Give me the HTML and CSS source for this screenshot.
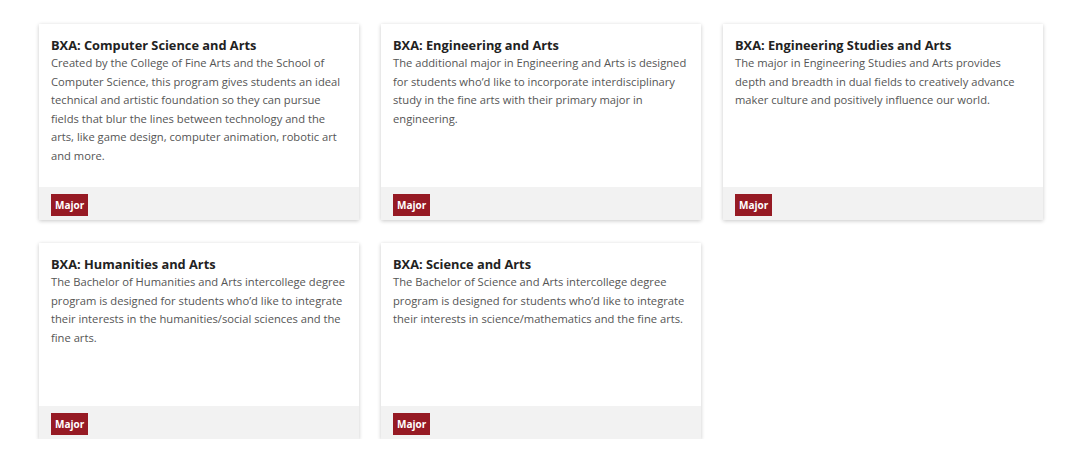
FILE: index.html
```html
<!DOCTYPE html>
<html lang="en">
<head>
<meta charset="utf-8">
<title>BXA Programs</title>
<link rel="stylesheet" href="styles.css">
</head>
<body>
<div class="grid">
  <div class="card">
    <div class="card-body">
      <h3 class="card-title">BXA: Computer Science and Arts</h3>
      <p class="card-text">Created by the College of Fine Arts and the School of Computer Science, this program gives students an ideal technical and artistic foundation so they can pursue fields that blur the lines between technology and the arts, like game design, computer animation, robotic art and more.</p>
    </div>
    <div class="card-footer"><span class="badge">Major</span></div>
  </div>
  <div class="card">
    <div class="card-body">
      <h3 class="card-title">BXA: Engineering and Arts</h3>
      <p class="card-text">The additional major in Engineering and Arts is designed for students who’d like to incorporate interdisciplinary study in the fine arts with their primary major in engineering.</p>
    </div>
    <div class="card-footer"><span class="badge">Major</span></div>
  </div>
  <div class="card">
    <div class="card-body">
      <h3 class="card-title">BXA: Engineering Studies and Arts</h3>
      <p class="card-text">The major in Engineering Studies and Arts provides depth and breadth in dual fields to creatively advance maker culture and positively influence our world.</p>
    </div>
    <div class="card-footer"><span class="badge">Major</span></div>
  </div>
  <div class="card">
    <div class="card-body">
      <h3 class="card-title">BXA: Humanities and Arts</h3>
      <p class="card-text">The Bachelor of Humanities and Arts intercollege degree program is designed for students who’d like to integrate their interests in the humanities/social sciences and the fine arts.</p>
    </div>
    <div class="card-footer"><span class="badge">Major</span></div>
  </div>
  <div class="card">
    <div class="card-body">
      <h3 class="card-title">BXA: Science and Arts</h3>
      <p class="card-text">The Bachelor of Science and Arts intercollege degree program is designed for students who’d like to integrate their interests in science/mathematics and the fine arts.</p>
    </div>
    <div class="card-footer"><span class="badge">Major</span></div>
  </div>
</div>
</body>
</html>
```
FILE: styles.css
```css
* { box-sizing: border-box; }
html, body { margin: 0; padding: 0; background: #fff; }
body {
  font-family: "Open Sans", "Liberation Sans", sans-serif;
  color: #555;
}
.grid {
  display: grid;
  grid-template-columns: repeat(3, 320px);
  column-gap: 22px;
  row-gap: 23px;
  padding: 24px 0 0 39px;
}
.card {
  display: flex;
  flex-direction: column;
  height: 196px;
  background: #fff;
  box-shadow: 0 1px 4px rgba(0, 0, 0, 0.22);
}
.card-body {
  flex: 1;
  padding: 12px 12px 0 12px;
}
.card-title {
  margin: 0;
  font-size: 12.8px;
  line-height: 18px;
  font-weight: 700;
  color: #222;
}
.card-text {
  margin: 0;
  font-size: 11.2px;
  line-height: 18.6px;
  color: #555;
}
.card-footer {
  height: 33px;
  background: #f2f2f2;
  padding: 5px 12px 0 12px;
}
.badge {
  display: inline-block;
  height: 22px;
  line-height: 22px;
  padding: 0 4px;
  background: #961a24;
  color: #fff;
  font-size: 10px;
  font-weight: 700;
}
```
